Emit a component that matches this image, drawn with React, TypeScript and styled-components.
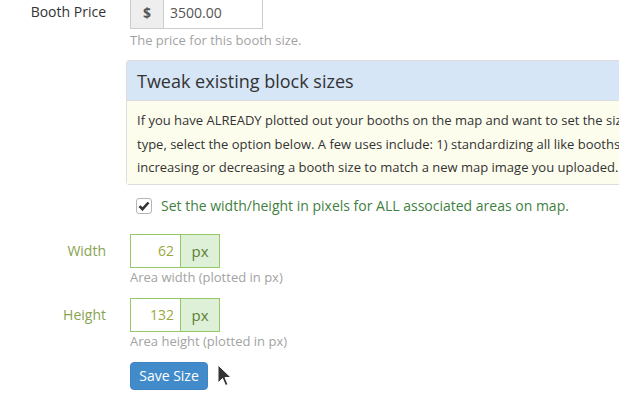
import React from "react";
import styled, { createGlobalStyle } from "styled-components";

const Global = createGlobalStyle`
  html, body { margin: 0; padding: 0; overflow: hidden; background: #fff; }
  body { font-family: "Open Sans", "Liberation Sans", sans-serif; font-size: 14px; color: #333; }
  * { box-sizing: border-box; }
`;

const Page = styled.div`
  position: relative;
  width: 619px;
  height: 412px;
  overflow: hidden;
  padding-top: 0;
`;

const Form = styled.div`
  margin-top: -5px;
  display: flex;
  flex-direction: column;
`;

const Row = styled.div<{ $mt?: number }>`
  display: grid;
  grid-template-columns: 106px 1fr;
  column-gap: 24px;
  margin-top: ${(p) => p.$mt ?? 0}px;
`;

const Label = styled.label<{ $success?: boolean }>`
  text-align: right;
  padding-top: 7px;
  line-height: 20px;
  font-size: 14px;
  color: ${(p) => (p.$success ? "#87a451" : "#333")};
`;

const Field = styled.div`
  display: flex;
  flex-direction: column;
  align-items: flex-start;
`;

const InputGroup = styled.div<{ $success?: boolean }>`
  display: flex;
  height: 34px;
  border: 1px solid ${(p) => (p.$success ? "#93c865" : "#ccc")};
`;

const Addon = styled.span<{ $success?: boolean; $w: number }>`
  width: ${(p) => p.$w}px;
  display: flex;
  align-items: center;
  justify-content: center;
  font-size: ${(p) => (p.$success ? "15px" : "14px")};
  font-weight: ${(p) => (p.$success ? 400 : 700)};
  background: ${(p) => (p.$success ? "#dff0d8" : "#eee")};
  color: ${(p) => (p.$success ? "#5b7f37" : "#555")};
  border-${(p) => (p.$success ? "left" : "right")}: 1px solid
    ${(p) => (p.$success ? "#93c865" : "#ccc")};
`;

const Value = styled.span<{ $success?: boolean; $w: number }>`
  width: ${(p) => p.$w}px;
  display: flex;
  align-items: center;
  justify-content: ${(p) => (p.$success ? "flex-end" : "flex-start")};
  padding: 0 6px;
  font-size: 14px;
  color: ${(p) => (p.$success ? "#9aa83e" : "#555")};
`;

const Help = styled.div<{ $mt?: number }>`
  margin-top: ${(p) => p.$mt ?? 0}px;
  font-size: 13px;
  line-height: 18px;
  color: #a3a3a3;
  white-space: nowrap;
`;

const Panel = styled.div`
  margin: 11px 0 0 126px;
  width: 640px;
  border: 1px solid #ddd;
  border-radius: 3px;
`;

const PanelHeading = styled.div`
  background: #d6e6f7;
  border-bottom: 1px solid #ddd;
  height: 40px;
  padding: 0 10px;
  display: flex;
  align-items: center;
  font-size: 18px;
  color: #333;
`;

const PanelBody = styled.div`
  background: #fdfdee;
  padding: 8px 10px 4px;
  font-size: 13px;
  line-height: 23.5px;
  color: #333;
`;

const Line = styled.div`
  white-space: nowrap;
`;

const CheckRow = styled.label`
  margin: 11px 0 0 136px;
  display: flex;
  align-items: center;
  gap: 9px;
  line-height: 20px;
  font-size: 14px;
  color: #3f7f3f;
`;

const CheckBox = styled.span`
  width: 16px;
  height: 16px;
  border: 1px solid #b5b5b5;
  border-radius: 3px;
  background: #fff;
  display: flex;
  align-items: center;
  justify-content: center;
`;

const Button = styled.button`
  margin-top: 12px;
  height: 28px;
  width: 78px;
  padding: 0;
  border: 1px solid #3f84c4;
  border-radius: 4px;
  background: #428bca;
  color: #fff;
  font-family: "Open Sans", "Liberation Sans", sans-serif;
  font-size: 14px;
`;

const Cursor = styled.svg`
  position: absolute;
  left: 217px;
  top: 364px;
`;

export default function App() {
  return (
    <Page>
      <Global />
      <Form>
        <Row>
          <Label>Booth Price</Label>
          <Field>
            <InputGroup>
              <Addon $w={33}>$</Addon>
              <Value $w={98}>3500.00</Value>
            </InputGroup>
            <Help $mt={2}>The price for this booth size.</Help>
          </Field>
        </Row>

        <Panel>
          <PanelHeading>Tweak existing block sizes</PanelHeading>
          <PanelBody>
            <Line>
              If you have ALREADY plotted out your booths on the map and want to set the size of all booths of this
            </Line>
            <Line>
              type, select the option below. A few uses include: 1) standardizing all like booths to the same size, or 2)
            </Line>
            <Line>increasing or decreasing a booth size to match a new map image you uploaded.</Line>
          </PanelBody>
        </Panel>

        <CheckRow>
          <CheckBox>
            <svg width="12" height="10" viewBox="0 0 12 10">
              <path d="M1.5 5.2 L4.5 8.2 L10.5 1.5" fill="none" stroke="#333" strokeWidth="2.6" />
            </svg>
          </CheckBox>
          Set the width/height in pixels for ALL associated areas on map.
        </CheckRow>

        <Row $mt={18}>
          <Label $success>Width</Label>
          <Field>
            <InputGroup $success>
              <Value $success $w={49}>62</Value>
              <Addon $success $w={39}>px</Addon>
            </InputGroup>
            <Help>Area width (plotted in px)</Help>
          </Field>
        </Row>

        <Row $mt={12}>
          <Label $success>Height</Label>
          <Field>
            <InputGroup $success>
              <Value $success $w={49}>132</Value>
              <Addon $success $w={39}>px</Addon>
            </InputGroup>
            <Help>Area height (plotted in px)</Help>
            <Button>Save Size</Button>
          </Field>
        </Row>
      </Form>
      <Cursor width="16" height="24" viewBox="0 0 16 24">
        <path d="M1 1 L1 19 L5.5 14.5 L8.5 21.5 L11 20.5 L8 13.5 L14 13.5 Z" fill="#333" stroke="#fff" strokeWidth="1" />
      </Cursor>
    </Page>
  );
}
